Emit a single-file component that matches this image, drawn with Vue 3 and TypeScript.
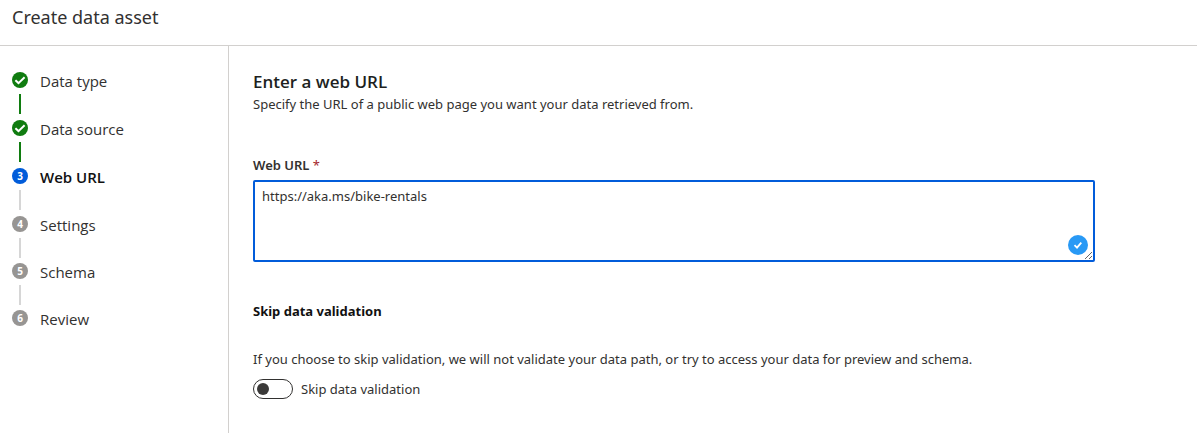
<script setup lang="ts">
import { ref } from 'vue'

interface Step {
  label: string
  state: 'done' | 'current' | 'todo'
}

const steps: Step[] = [
  { label: 'Data type', state: 'done' },
  { label: 'Data source', state: 'done' },
  { label: 'Web URL', state: 'current' },
  { label: 'Settings', state: 'todo' },
  { label: 'Schema', state: 'todo' },
  { label: 'Review', state: 'todo' },
]

const url = ref('https://aka.ms/bike-rentals')
const skip = ref(false)
</script>

<template>
  <div class="page">
    <header class="header">
      <h1>Create data asset</h1>
    </header>
    <div class="body">
      <nav class="steps">
        <ol>
          <li v-for="(step, i) in steps" :key="step.label" :class="['step', step.state]">
            <span class="track">
              <span class="marker">
                <svg v-if="step.state === 'done'" viewBox="0 0 16 16" width="16" height="16">
                  <path d="M3.4 8.2 6.5 11.1 12.6 5.2" fill="none" stroke="#fff" stroke-width="2" />
                </svg>
                <template v-else>{{ i + 1 }}</template>
              </span>
              <span v-if="i < steps.length - 1" class="line"></span>
            </span>
            <span class="label">{{ step.label }}</span>
          </li>
        </ol>
      </nav>
      <main class="content">
        <h2>Enter a web URL</h2>
        <p class="intro">Specify the URL of a public web page you want your data retrieved from.</p>
        <label class="field-label" for="web-url">Web URL <span class="required">*</span></label>
        <div class="field">
          <textarea id="web-url" v-model="url" required spellcheck="false"></textarea>
          <svg class="badge" viewBox="0 0 20 20" width="20" height="20">
            <circle cx="10" cy="10" r="10" fill="#2899f5" />
            <path d="M6.5 10.2 9 12.6 13.3 7.6" fill="none" stroke="#fff" stroke-width="1.8" />
          </svg>
        </div>
        <h3>Skip data validation</h3>
        <p class="note">If you choose to skip validation, we will not validate your data path, or try to access your data for preview and schema.</p>
        <label class="toggle">
          <input v-model="skip" type="checkbox" role="switch" />
          <span>Skip data validation</span>
        </label>
      </main>
    </div>
  </div>
</template>

<style>
body {
  margin: 0;
  background: #fff;
}
</style>

<style scoped>
.page {
  display: flex;
  flex-direction: column;
  min-height: 100vh;
  font-family: "Noto Sans", "Open Sans", sans-serif;
  font-size: 13px;
  line-height: 20px;
  color: #323130;
}
h1, h2, h3, p, ol {
  margin: 0;
  padding: 0;
}
.header {
  padding: 5px 12px 16px;
  border-bottom: 1px solid #d2d0ce;
}
h1 {
  font-size: 18px;
  line-height: 24px;
  font-weight: 400;
}
.body {
  flex: 1;
  display: flex;
}
.steps {
  box-sizing: border-box;
  flex: none;
  width: 229px;
  padding: 26px 12px 0;
  border-right: 1px solid #d2d0ce;
}
.step {
  display: flex;
  gap: 12px;
  font-family: "Open Sans", "Noto Sans", sans-serif;
  font-size: 15px;
}
.track {
  display: flex;
  flex-direction: column;
  align-items: center;
}
.marker {
  display: flex;
  align-items: center;
  justify-content: center;
  width: 16px;
  height: 16px;
  border-radius: 50%;
  background: #979593;
  color: #fff;
  font-size: 10px;
  line-height: 16px;
  font-weight: 700;
}
.line {
  width: 2px;
  height: 20px;
  margin: 6px 0;
  background: #d6d6d6;
}
.todo .line {
  margin-bottom: 5px;
}
.done .marker,
.done .line {
  background: #107c10;
}
.current .marker {
  background: #015cda;
}
.label {
  line-height: 18px;
}
.current .label {
  font-weight: 600;
  color: #111;
}
.content {
  flex: 1;
  min-width: 0;
  padding: 24px 102px 24px 24px;
}
h2 {
  font-family: "Open Sans", "Noto Sans", sans-serif;
  font-size: 17px;
  line-height: 24px;
  font-weight: 600;
  color: #201f1e;
}
.field-label {
  display: block;
  margin: 41px 0 5px;
  font-weight: 600;
}
.required {
  color: #a4262c;
  font-weight: 400;
}
.field {
  position: relative;
}
textarea {
  box-sizing: border-box;
  display: block;
  width: 100%;
  height: 82px;
  padding: 4px 7px;
  border: 2px solid #015cda;
  border-radius: 2px;
  outline: none;
  background: #fff;
  color: inherit;
  font: inherit;
  resize: vertical;
}
.badge {
  position: absolute;
  right: 7px;
  bottom: 7px;
}
h3 {
  margin: 39px 0 28px;
  font-size: 13px;
  line-height: 20px;
  font-weight: 700;
  color: #111;
}
.toggle {
  display: flex;
  align-items: center;
  gap: 8px;
  margin-top: 10px;
}
.toggle input {
  appearance: none;
  box-sizing: border-box;
  display: flex;
  align-items: center;
  width: 40px;
  height: 20px;
  margin: 0;
  padding: 0 3px;
  border: 1px solid #323130;
  border-radius: 10px;
}
.toggle input::before {
  content: "";
  width: 12px;
  height: 12px;
  border-radius: 50%;
  background: #3b3a39;
}
.toggle input:checked {
  justify-content: flex-end;
}
</style>
